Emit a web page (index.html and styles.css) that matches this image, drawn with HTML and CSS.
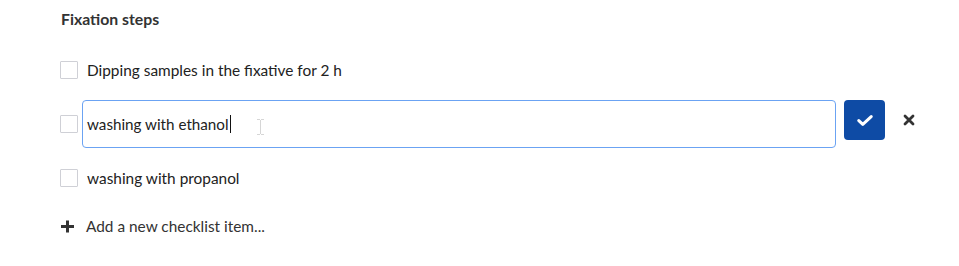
FILE: index.html
```html
<!DOCTYPE html>
<html>
<head>
<meta charset="utf-8">
<link rel="stylesheet" href="styles.css">
</head>
<body>
<div class="checklist">
  <div class="title">Fixation steps</div>
  <div class="row">
    <span class="box"></span>
    <span class="label">Dipping samples in the fixative for 2 h</span>
  </div>
  <div class="row editing">
    <span class="box"></span>
    <div class="field">
      <span class="value">washing with ethanol</span><span class="caret"></span>
      <svg class="ibeam" width="9" height="16" viewBox="0 0 9 16"><path d="M1 0.5h3M5 0.5h3M4.5 1v14M1 15.5h3M5 15.5h3" stroke="#d6d6d6" stroke-width="1" fill="none"/></svg>
    </div>
    <button class="ok" type="button">
      <svg width="16" height="11" viewBox="0 0 16 11"><path d="M1.8 5.6l4 3.8L14.2 1.6" stroke="#fff" stroke-width="3" fill="none" stroke-linecap="round" stroke-linejoin="round"/></svg>
    </button>
    <span class="cancel">
      <svg width="12" height="12" viewBox="0 0 12 12"><path d="M2 2l8 8M10 2l-8 8" stroke="#333" stroke-width="2.8" stroke-linecap="round"/></svg>
    </span>
  </div>
  <div class="row">
    <span class="box"></span>
    <span class="label">washing with propanol</span>
  </div>
  <div class="add">
    <svg width="15" height="13" viewBox="0 0 15 13"><path d="M7.5 0.5v12M1 6.5h13" stroke="#333" stroke-width="3"/></svg>
    <span>Add a new checklist item...</span>
  </div>
</div>
</body>
</html>
```
FILE: styles.css
```css
html, body {
  margin: 0;
  background: #fff;
}
body {
  font-family: Lato, "Open Sans", sans-serif;
  color: #222;
}
.checklist {
  padding-left: 60px;
  width: 860px;
}
.title {
  font-size: 15.8px;
  font-weight: 700;
  line-height: 18px;
  padding: 10px 0 15px 1px;
  color: #333;
}
.row {
  display: flex;
  align-items: center;
  height: 54px;
}
.box {
  width: 16px;
  height: 16px;
  border: 1px solid #cfd0d6;
  border-radius: 1px;
  flex: none;
}
.label {
  margin-left: 9px;
  font-size: 15.4px;
  line-height: 18px;
}
.row.editing {
  position: relative;
}
.field {
  position: relative;
  margin-left: 4px;
  width: 748px;
  height: 46px;
  border: 1px solid #6ba3f3;
  border-radius: 4px;
  padding-left: 4px;
  display: flex;
  align-items: center;
  font-size: 15.2px;
}
.caret {
  display: inline-block;
  width: 1px;
  height: 18px;
  background: #111;
  margin-left: 1px;
}
.ibeam {
  position: absolute;
  left: 173px;
  top: 18px;
}
.ok {
  align-self: flex-start;
  margin-top: 3px;
  margin-left: 8px;
  width: 41px;
  height: 40px;
  border: none;
  border-radius: 4px;
  background: #0e4ba5;
  display: flex;
  align-items: center;
  justify-content: center;
  padding: 0;
  flex: none;
}
.cancel {
  align-self: flex-start;
  margin-top: 17px;
  margin-left: 18px;
  display: flex;
}
.add {
  display: flex;
  align-items: center;
  height: 42px;
  font-size: 15.4px;
  color: #333;
}
.add svg {
  margin-left: 0;
  margin-right: 11px;
}
```
